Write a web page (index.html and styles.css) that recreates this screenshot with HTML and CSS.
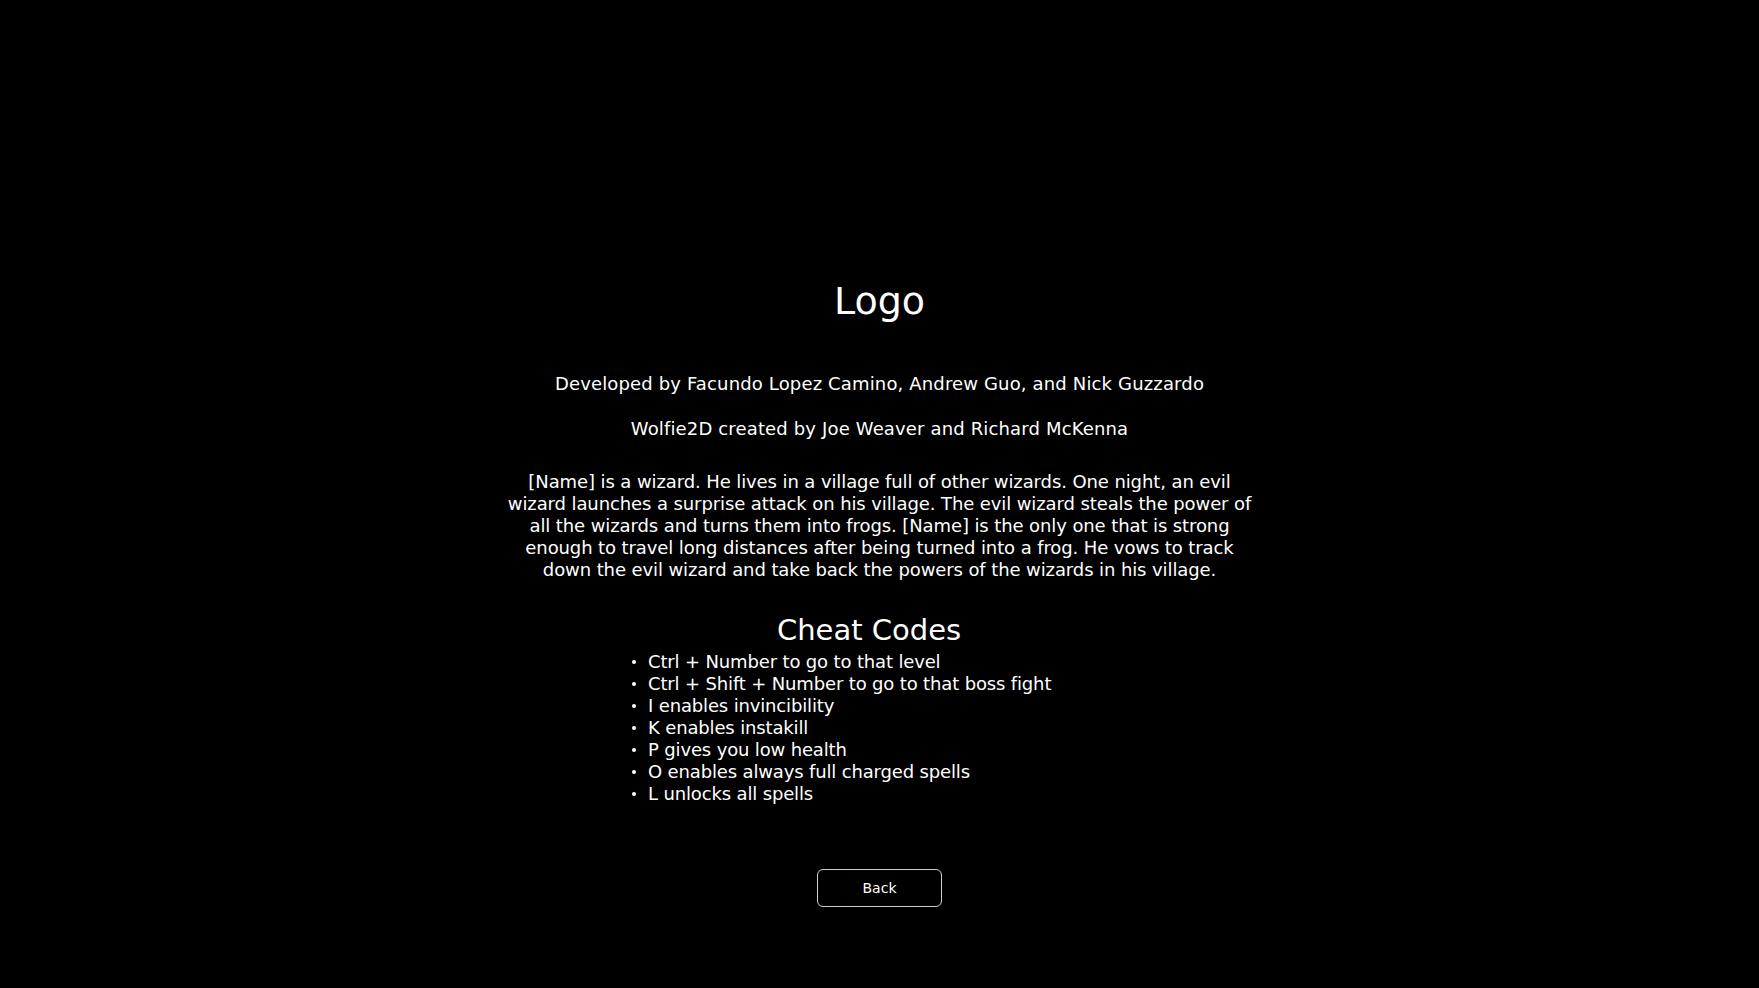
FILE: index.html
```html
<!DOCTYPE html>
<html lang="en">
<head>
<meta charset="utf-8">
<title>Credits</title>
<link rel="stylesheet" href="styles.css">
</head>
<body>
<main class="screen">
  <h1 class="logo">Logo</h1>
  <p class="credit credit-dev">Developed by Facundo Lopez Camino, Andrew Guo, and Nick Guzzardo</p>
  <p class="credit credit-engine">Wolfie2D created by Joe Weaver and Richard McKenna</p>
  <p class="story">[Name] is a wizard. He lives in a village full of other wizards. One night, an evil wizard launches a surprise attack on his village. The evil wizard steals the power of all the wizards and turns them into frogs. [Name] is the only one that is strong enough to travel long distances after being turned into a frog. He vows to track down the evil wizard and take back the powers of the wizards in his village.</p>
  <section class="cheats">
    <h2 class="cheats-title">Cheat Codes</h2>
    <ul class="cheats-list">
      <li>Ctrl + Number to go to that level</li>
      <li>Ctrl + Shift + Number to go to that boss fight</li>
      <li>I enables invincibility</li>
      <li>K enables instakill</li>
      <li>P gives you low health</li>
      <li>O enables always full charged spells</li>
      <li>L unlocks all spells</li>
    </ul>
  </section>
  <button class="back-btn" type="button">Back</button>
</main>
</body>
</html>
```

FILE: styles.css
```css
html, body {
  margin: 0;
  padding: 0;
  background: #000;
}

body {
  width: 1759px;
  height: 988px;
  overflow: hidden;
  color: #fff;
  font-family: "DejaVu Sans", "Noto Sans", sans-serif;
}

.screen {
  display: flex;
  flex-direction: column;
  align-items: center;
  padding-top: 279px;
}

.logo {
  margin: 0;
  font-size: 38px;
  line-height: 44px;
  font-weight: normal;
}

.credit {
  margin: 0;
  font-size: 18px;
  line-height: 22px;
  letter-spacing: 0.15px;
}

.credit-dev {
  margin-top: 50px;
}

.credit-engine {
  margin-top: 23px;
}

.story {
  margin: 31px 0 0;
  width: 760px;
  text-align: center;
  font-size: 18px;
  line-height: 22px;
  letter-spacing: -0.1px;
}

.cheats {
  width: 495px;
  margin-top: 31px;
  display: flex;
  flex-direction: column;
}

.cheats-title {
  margin: 0;
  padding-right: 21px;
  text-align: center;
  font-size: 29px;
  line-height: 36px;
  font-weight: normal;
}

.cheats-list {
  margin: 3px 0 0;
  padding: 0;
  list-style: none;
  font-size: 18px;
  line-height: 22px;
  letter-spacing: -0.15px;
}

.cheats-list li {
  display: flex;
  align-items: center;
  gap: 12px;
}

.cheats-list li::before {
  content: "";
  width: 4px;
  height: 4px;
  border-radius: 50%;
  background: #fff;
  flex: none;
}

.back-btn {
  margin-top: 64px;
  width: 125px;
  height: 38px;
  background: #000;
  color: #fff;
  border: 1px solid #d0d0d0;
  border-radius: 6px;
  font-family: inherit;
  font-size: 14px;
  padding: 0;
}
```
